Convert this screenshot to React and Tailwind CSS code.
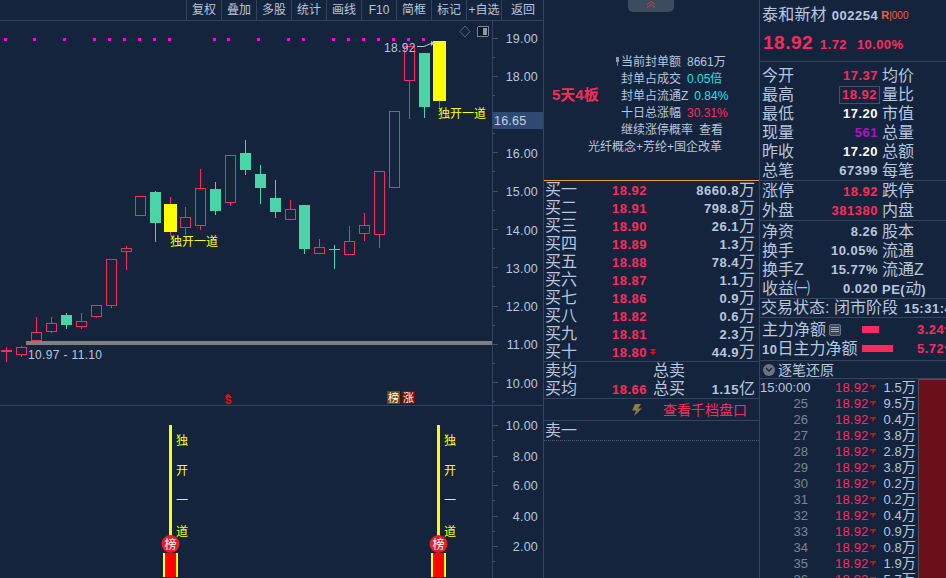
import React from 'react';

const RED = '#ff2a5c';
const GREEN = '#4bd4a8';
const YELLOW = '#ffff00';

const TOOLS = ['复权', '叠加', '多股', '统计', '画线', 'F10', '简框', '标记', '+自选'];

// i, body top, body bottom, wick top, wick bottom, kind
const CANDLES = [
  [1, 347, 355, 346, 357, 'r'], [2, 332, 341, 317, 341, 'r'], [3, 323, 332, 317, 333, 'r'],
  [4, 315, 325, 313, 329, 'g'], [5, 321, 327, 313, 329, 'r'], [6, 305, 317, 305, 318, 'r'],
  [7, 259, 306, 259, 308, 'r'], [8, 248, 252, 246, 270, 'r'], [9, 196, 216, 196, 216, 'r'],
  [10, 192, 223, 191, 242, 'g'], [11, 204, 232, 197, 235, 'y'], [12, 217, 228, 207, 235, 'r'],
  [13, 188, 226, 169, 230, 'r'], [14, 189, 211, 182, 215, 'g'], [15, 155, 203, 155, 206, 'r'],
  [16, 153, 170, 140, 175, 'g'], [17, 174, 188, 165, 204, 'g'], [18, 198, 212, 180, 218, 'g'],
  [19, 209, 220, 200, 220, 'r'], [20, 205, 249, 205, 254, 'g'], [21, 247, 254, 239, 254, 'r'],
  [23, 241, 255, 226, 255, 'r'], [24, 225, 234, 213, 241, 'r'], [25, 171, 235, 171, 248, 'r'],
  [26, 111, 188, 111, 188, 'r'], [27, 46, 81, 46, 119, 'r'], [28, 53, 107, 53, 118, 'g'],
  [29, 41, 101, 41, 107, 'y'],
];

const DOTS = [5, 34, 64, 94, 109, 124, 139, 154, 169, 214, 228, 258, 288, 303, 333, 348, 363, 378, 393, 408, 423];
const PRICES = [19, 18, 17, 16, 15, 14, 13, 12, 11, 10];

const BUYS = [
  ['买一', '18.92', '8660.8'], ['买二', '18.91', '798.8'], ['买三', '18.90', '26.1'],
  ['买四', '18.89', '1.3'], ['买五', '18.88', '78.4'], ['买六', '18.87', '1.1'],
  ['买七', '18.86', '0.9'], ['买八', '18.82', '0.6'], ['买九', '18.81', '2.3'], ['买十', '18.80', '44.9'],
];

const TICKS = [
  ['15:00:00', '1.5'], ['25', '9.5'], ['26', '0.4'], ['27', '3.8'], ['28', '2.8'], ['29', '3.8'], ['30', '0.2'],
  ['31', '0.2'], ['32', '0.4'], ['33', '0.9'], ['34', '0.8'], ['35', '1.9'], ['36', '5.7'],
];

const cx = (i) => Math.round(6.3 + 14.907 * i);
const py = (p) => 38 + (19 - p) * 38.3;

const Candle = ({ c }) => {
  const [i, top, bot, wt, wb, kind] = c;
  const x = cx(i);
  if (kind === 'y') {
    return (
      <g>
        <line x1={x + 0.5} x2={x + 0.5} y1={wt} y2={wb} stroke={RED} />
        <rect x={x - 6} y={top} width={13} height={bot - top} fill={YELLOW} />
      </g>
    );
  }
  if (kind === 'g') {
    return (
      <g>
        <line x1={x + 0.5} x2={x + 0.5} y1={wt} y2={wb} stroke={GREEN} />
        <rect x={x - 5} y={top} width={11} height={bot - top} fill={GREEN} />
      </g>
    );
  }
  return (
    <g>
      <line x1={x + 0.5} x2={x + 0.5} y1={wt} y2={top} stroke={RED} />
      <line x1={x + 0.5} x2={x + 0.5} y1={bot} y2={wb} stroke={RED} />
      <rect x={x - 4.5} y={top + 0.5} width={10} height={bot - top - 1} fill="none" stroke={RED} />
    </g>
  );
};

const AxisLabel = ({ y, children }) => (
  <text x={538} y={y + 5} textAnchor="end" fontSize="12.5" letterSpacing="0.2" fill="#b8c6de">{children}</text>
);

const MainChart = () => (
  <svg width="544" height="384" viewBox="0 21 544 384" shapeRendering="crispEdges" className="block">
    {DOTS.map((x) => <rect key={x} x={x - 1} y={38} width={3} height={3} fill="#ff00ff" />)}

    {/* the two dojis */}
    <line x1={6.5} x2={6.5} y1={347} y2={362} stroke={RED} />
    <rect x={1} y={350} width={11} height={2} fill={RED} />
    <line x1={334.5} x2={334.5} y1={245} y2={269} stroke={GREEN} />
    <rect x={329} y={249} width={11} height={1} fill={GREEN} />

    {CANDLES.map((c) => <Candle key={c[0]} c={c} />)}

    <rect x={26} y={341} width={466} height={4} fill="#808080" />
    <text x={28} y={359} fontSize="12" letterSpacing="0.35" fill="#b8c6de">10.97 - 11.10</text>

    <text x={384} y={52} fontSize="12" letterSpacing="0.35" fill="#b8c6de">18.92</text>
    <path d="M417 46.5H424L431 43.5" fill="none" stroke="#b8c6de" shapeRendering="auto" />
    <path d="M431 41L435 43L431 46Z" fill="#b8c6de" shapeRendering="auto" />

    <path d="M465 26L470 31.5L465 37L460 31.5Z" fill="none" stroke="#5a6472" shapeRendering="auto" />
    <rect x={477.5} y={26.5} width={11} height={10} rx={1.5} fill="#0e1a2c" stroke="#7c8592" />
    <rect x={483} y={28} width={4} height={7} fill="#8d96a2" />

    <text x={438} y={118} fontSize="12" fill={YELLOW}>独开一道</text>
    <text x={170} y={246} fontSize="12" fill={YELLOW}>独开一道</text>

    {/* event marks */}
    <path d="M228 393L231 397H225Z" fill="#ff0000" />
    <text x={228} y={404} fontSize="10" fontWeight="700" textAnchor="middle" fill="#ff0000">S</text>
    <rect x={387} y={391} width={13} height={13} fill="#7a4208" />
    <text x={393.5} y={402} fontSize="11" textAnchor="middle" fill="#ffffff">榜</text>
    <rect x={402} y={391} width={13} height={13} fill="#7a0c0c" />
    <text x={408.5} y={402} fontSize="11" textAnchor="middle" fill="#ffffff">涨</text>

    {/* price axis */}
    <line x1={492.5} x2={492.5} y1={21} y2={405} stroke="#33445f" />
    {PRICES.map((p) => (
      <g key={p}>
        <line x1={492} x2={498} y1={py(p)} y2={py(p)} stroke="#3d4f6d" />
        <line x1={492} x2={495} y1={py(p) + 19} y2={py(p) + 19} stroke="#3d4f6d" />
        {p !== 17 && <AxisLabel y={py(p)}>{p.toFixed(2)}</AxisLabel>}
      </g>
    ))}
    <rect x={493} y={112} width={51} height={17} fill="#2c4a72" />
    <text x={494} y={125} fontSize="12.5" letterSpacing="0.2" fill="#c5d2e6">16.65</text>
  </svg>
);

const Signal = ({ x }) => (
  <g>
    <rect x={x} y={425} width={3} height={112} fill={YELLOW} />
    {['独', '开', '一', '道'].map((ch, i) => (
      <text key={ch} x={x + 7} y={[445, 475, 505, 536][i]} fontSize="12" fill={YELLOW}>{ch}</text>
    ))}
    <rect x={x - 6} y={553} width={15} height={24} fill={YELLOW} />
    <rect x={x - 4} y={553} width={11} height={24} fill="#ff0000" />
    <circle cx={x + 1.5} cy={544} r={9} fill="#ec1c24" shapeRendering="auto" />
    <text x={x + 1.5} y={549} fontSize="12" textAnchor="middle" fill="#ffffff">榜</text>
  </g>
);

const SubChart = () => (
  <svg width="544" height="172" viewBox="0 406 544 172" shapeRendering="crispEdges" className="block">
    <line x1={492.5} x2={492.5} y1={406} y2={578} stroke="#33445f" />
    {[425, 456, 485, 516, 546].map((y, i) => (
      <g key={y}>
        <line x1={492} x2={498} y1={y} y2={y} stroke="#3d4f6d" />
        <line x1={492} x2={495} y1={y + 15} y2={y + 15} stroke="#3d4f6d" />
        <AxisLabel y={y}>{['10.00', '8.00', '6.00', '4.00', '2.00'][i]}</AxisLabel>
      </g>
    ))}
    <Signal x={169} />
    <Signal x={437} />
  </svg>
);

const Lbl = ({ children, className = '' }) => (
  <span className={`text-[16px] leading-none text-[#b8c6de] whitespace-nowrap ${className}`}>{children}</span>
);

const Num = ({ children, className = 'text-[#b8c6de]' }) => (
  <span className={`text-[13px] font-bold tracking-[0.5px] leading-none whitespace-nowrap ${className}`}>{children}</span>
);

const BookRow = ({ label, price, qty, unit, arrow }) => (
  <div className="flex items-center h-[18px] pl-[1px] pr-[4px]">
    <Lbl className="w-[67px]">{label}</Lbl>
    <Num className="w-[37px] text-[#ff2a5c]">{price}</Num>
    {arrow && (
      <svg width="6" height="6" viewBox="0 0 6 6" className="ml-[1px]">
        <path d="M0 0H6L3 3ZM0 3H6L3 6Z" fill="#ff0000" />
      </svg>
    )}
    <span className="ml-auto flex items-center">
      <Num>{qty}</Num>
      <Lbl>{unit}</Lbl>
    </span>
  </div>
);

const InfoLine = ({ children, className = 'pl-[77px]' }) => (
  <div className={`h-[17px] flex items-center text-[12px] leading-none text-[#b8c6de] whitespace-nowrap ${className}`}>{children}</div>
);

const MiddlePanel = () => (
  <div className="w-[217px] shrink-0 h-full flex flex-col border-x border-[#33445f]">
    <div className="relative h-[181px] shrink-0 border-b border-[#e8a030] flex">
      <div className="absolute left-[84px] top-0 w-[46px] h-[12px] bg-[#3d4b5e] rounded-b-[5px] flex justify-center">
        <svg width="10" height="7" viewBox="0 0 10 7" className="mt-[1px]">
          <path d="M1 3.5L5 .5L9 3.5M1 6.5L5 3.5L9 6.5" fill="none" stroke="#d83a4a" />
        </svg>
      </div>
      <div className="w-full flex flex-col pt-[53px]">
        <InfoLine>
          <svg width="3" height="9" viewBox="0 0 3 9" className="-ml-[5px] mr-[2px]"><path d="M0 0H3V5H2V9H1V5H0Z" fill="#8d96a2" /></svg>
          <span>当前封单额</span><span className="ml-[6px]">8661万</span>
        </InfoLine>
        <InfoLine><span>封单占成交</span><span className="ml-[6px] text-[#1fe0f0]">0.05倍</span></InfoLine>
        <InfoLine><span>封单占流通Z</span><span className="ml-[6px] text-[#1fe0f0]">0.84%</span></InfoLine>
        <InfoLine><span>十日总涨幅</span><span className="ml-[6px] text-[#ff2a5c]">30.31%</span></InfoLine>
        <InfoLine><span>继续涨停概率</span><span className="ml-[6px]">查看</span></InfoLine>
        <InfoLine className="pl-[44px]">光纤概念+芳纶+国企改革</InfoLine>
      </div>
      <div className="absolute left-[8px] top-[85px] text-[15px] font-bold leading-[20px] text-[#ff2a5c]">5天4板</div>
    </div>

    <div className="shrink-0">
      {BUYS.map((b, i) => (
        <BookRow key={b[0]} label={b[0]} price={b[1]} qty={b[2]} unit="万" arrow={i === 9} />
      ))}
    </div>
    <div className="shrink-0 border-t border-[#33445f]">
      <div className="flex items-center h-[18px] pl-[1px]">
        <Lbl className="w-[108px]">卖均</Lbl>
        <Lbl>总卖</Lbl>
      </div>
      <div className="flex items-center h-[18px] pl-[1px] pr-[4px]">
        <Lbl className="w-[67px]">买均</Lbl>
        <Num className="w-[41px] text-[#ff2a5c]">18.66</Num>
        <Lbl>总买</Lbl>
        <span className="ml-auto flex items-center"><Num>1.15</Num><Lbl>亿</Lbl></span>
      </div>
    </div>
    <div className="shrink-0 h-[23px] border-y border-[#33445f] flex items-center pl-[87px]">
      <svg width="11" height="12" viewBox="0 0 11 12">
        <path d="M4 0H10L7 4.5H11L3 12L5 6.5H1Z" fill="#8a7f3e" />
      </svg>
      <span className="ml-[21px] text-[14px] leading-none text-[#ff2a5c] whitespace-nowrap">查看千档盘口</span>
    </div>
    <div className="shrink-0 h-[20px] border-b border-dotted border-[#4a5b78] flex items-center pl-[1px]">
      <Lbl>卖一</Lbl>
    </div>
  </div>
);

const StatRow = ({ l, v, c = 'text-[#b8c6de]', r, boxed, h = 'h-[19px]' }) => (
  <div className={`flex items-center pl-[2px] ${h}`}>
    <Lbl className="w-[50px] shrink-0">{l}</Lbl>
    <div className="w-[66px] flex justify-end shrink-0">
      {boxed ? (
        <span className="border border-[#4a4f58] h-[18px] px-[2px] -mr-[2px] flex items-center"><Num className={c}>{v}</Num></span>
      ) : (
        <Num className={c}>{v}</Num>
      )}
    </div>
    <Lbl className="ml-[4px]">{r}</Lbl>
  </div>
);

const RightPanel = () => (
  <div className="w-[186px] shrink-0 h-full flex flex-col overflow-hidden">
    <div className="h-[62px] shrink-0 border-b border-[#33445f]">
      <div className="flex items-center h-[30px] pl-[2px]">
        <span className="text-[16px] leading-none text-[#b8c6de] tracking-[0.2px]">泰和新材</span>
        <Num className="ml-[5px] text-[#b8c6de] text-[12px]">002254</Num>
        <span className="ml-[3px] text-[10px] leading-none text-[#f0603a]"><b className="text-[11px]">R</b>|000</span>
      </div>
      <div className="flex items-baseline pl-[3px] pt-[3px]">
        <span className="text-[19px] font-bold leading-none tracking-[0.5px] text-[#ff2a5c]">18.92</span>
        <span className="ml-[7px] text-[13px] font-bold leading-none tracking-[0.4px] text-[#ff2a5c]">1.72</span>
        <span className="ml-[10px] text-[13px] font-bold leading-none tracking-[0.4px] text-[#ff2a5c]">10.00%</span>
      </div>
    </div>
    <div className="h-[119px] shrink-0 border-b border-[#33445f] pt-[4px]">
      <StatRow l="今开" v="17.37" c="text-[#ff2a5c]" r="均价" />
      <StatRow l="最高" v="18.92" c="text-[#ff2a5c]" r="量比" boxed />
      <StatRow l="最低" v="17.20" c="text-white" r="市值" />
      <StatRow l="现量" v="561" c="text-[#b010c8]" r="总量" />
      <StatRow l="昨收" v="17.20" c="text-white" r="总额" />
      <StatRow l="总笔" v="67399" r="每笔" />
    </div>
    <div className="h-[40px] shrink-0 border-b border-[#33445f]">
      <StatRow l="涨停" v="18.92" c="text-[#ff2a5c]" r="跌停" h="h-[20px]" />
      <StatRow l="外盘" v="381380" c="text-[#ff2a5c]" r="内盘" />
    </div>
    <div className="h-[78px] shrink-0 border-b border-[#33445f] pt-[1px]">
      <StatRow l="净资" v="8.26" r="股本" />
      <StatRow l="换手" v="10.05%" r="流通" />
      <StatRow l="换手Z" v="15.77%" r="流通Z" />
      <StatRow
        l="收益㈠"
        v="0.020"
        r={<><span className="text-[13px] font-bold tracking-[0.5px]">PE(</span>动<span className="text-[13px] font-bold">)</span></>}
      />
    </div>
    <div className="h-[19px] shrink-0 border-b border-[#33445f] flex items-center pl-[1px] whitespace-nowrap">
      <Lbl>交易状态: 闭市阶段</Lbl>
      <Num className="ml-[6px] text-[#b8c6de]">15:31:4</Num>
    </div>
    <div className="h-[43px] shrink-0 border-b border-[#33445f] grid grid-cols-[100px_55px_1fr] grid-rows-[19px_19px] items-center pl-[2px] pt-[2px]">
      <div className="flex items-center">
        <Lbl>主力净额</Lbl>
        <span className="ml-[3px] w-[12px] h-[12px] bg-[#3f4a57] border border-[#6b7480] rounded-[2px] flex flex-col justify-center gap-[1px] px-[1px]">
          <i className="h-px bg-[#a0a8b2]" /><i className="h-px bg-[#a0a8b2]" /><i className="h-px bg-[#a0a8b2]" />
        </span>
      </div>
      <div className="w-[17px] h-[7px] bg-[#ff2a5c]" />
      <Num className="text-[#ff2a5c]">3.24亿</Num>
      <Lbl><span className="text-[13px] font-bold tracking-[0.5px]">10</span>日主力净额</Lbl>
      <div className="w-[31px] h-[7px] bg-[#ff2a5c]" />
      <Num className="text-[#ff2a5c]">5.72亿</Num>
    </div>
    <div className="h-[18px] shrink-0 border-b border-[#33445f] flex items-center pl-[3px]">
      <span className="w-[12px] h-[12px] rounded-full bg-[#6d7480] flex items-center justify-center">
        <svg width="8" height="6" viewBox="0 0 8 6"><path d="M1 1L4 4L7 1" fill="none" stroke="#1a2536" strokeWidth="1.4" /></svg>
      </span>
      <span className="ml-[3px] text-[14px] leading-none text-[#b8c6de]">逐笔还原</span>
    </div>
    <div className="flex flex-1 overflow-hidden">
      <div className="w-[158px] shrink-0">
        {TICKS.map(([t, q]) => (
          <div key={t} className="flex items-center h-[16px] text-[13px] leading-none">
            <span className={`w-[48px] text-right ${t.length > 2 ? 'text-[#b8c6de]' : 'text-[#7d8590]'}`}>{t}</span>
            <span className="ml-[27px] text-[#ff2a5c] tracking-[0.2px]">18.92</span>
            <svg width="6" height="5" viewBox="0 0 6 5" className="ml-[1px]"><path d="M0 0H6V1.5H4V4H3V5H2.5V1.5H0Z" fill="#ff0000" /></svg>
            <span className="ml-[8px] flex items-center text-[#b8c6de]">{q}<span className="text-[14px]">万</span></span>
          </div>
        ))}
      </div>
      <div className="flex-1 bg-[#6b0f1a] border-t border-l border-[#4a5260]" />
    </div>
  </div>
);

export default function App() {
  return (
    <div className="w-[946px] h-[578px] overflow-hidden flex bg-[#14243d] font-['Liberation_Sans','Noto_Sans_CJK_SC',sans-serif]">
      <div className="w-[544px] shrink-0 flex flex-col h-full -mr-px">
        <div className="h-[21px] shrink-0 border-b border-[#33445f] flex justify-end">
          {TOOLS.map((t) => (
            <div key={t} className="w-[35px] h-full border-l border-[#33445f] flex items-center justify-center text-[12px] leading-none text-[#b8c6de] whitespace-nowrap">{t}</div>
          ))}
          <div className="w-[43px] h-full border-l border-[#33445f] flex items-center justify-center text-[12px] leading-none text-[#b8c6de]">返回</div>
        </div>
        <MainChart />
        <div className="h-px shrink-0 bg-[#33445f]" />
        <SubChart />
      </div>
      <MiddlePanel />
      <RightPanel />
    </div>
  );
}
